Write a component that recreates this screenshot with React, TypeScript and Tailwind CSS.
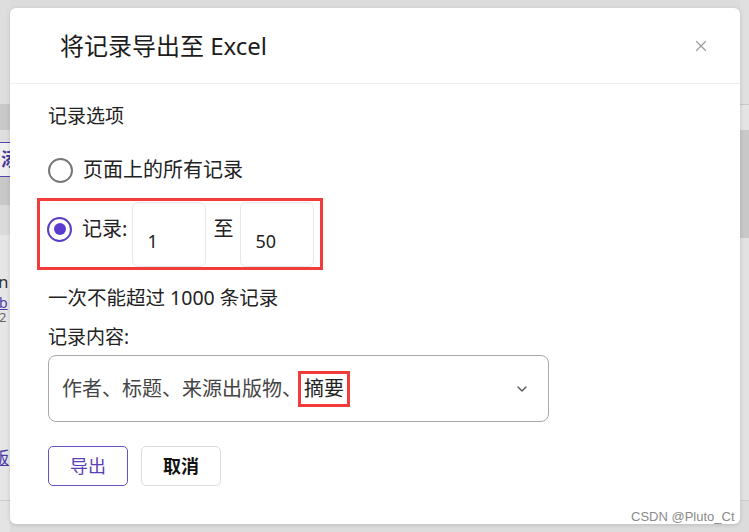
import { ChevronDown, X } from "lucide-react";

const font = { fontFamily: '"Noto Sans", "Noto Sans CJK SC", sans-serif' };

const Background = () => {
  return (
    <div className="flex h-full w-full justify-between">
      <div className="flex w-[10px] flex-col overflow-hidden">
        <div className="h-[104px] bg-[#dedede]" />
        <div className="h-[26px] bg-[#c9c9c9]" />
        <div className="h-[12px] bg-[#dedede]" />
        <div className="flex h-[35px] items-center justify-end overflow-hidden border-y border-[#5a45b0] bg-[#efefef]">
          <span className="mr-[-9px] text-[18px] font-bold text-[#4a3a9c]">添</span>
        </div>
        <div className="h-[28px] bg-[#c8c8c8]" />
        <div className="h-[30px] bg-[#dadada]" />
        <div className="flex h-[265px] flex-col bg-[#e6e6e6] text-[17px] leading-none">
          <span className="ml-[-2px] mt-[38px] text-[#333]">n</span>
          <span className="ml-[-1px] mt-[6px] text-[14px] leading-[13px] text-[#4a3aa8] underline">b</span>
          <span className="ml-[-1px] mt-[2px] text-[13px] leading-[12px] text-[#666]">2</span>
          <span className="ml-[-8px] mt-[126px] text-[#4a3aa8] underline">版</span>
        </div>
        <div className="flex-1 border-t border-[#cccccc] bg-[#e4e4e4]" />
      </div>
      <div className="flex w-[9px] flex-col">
        <div className="h-[105px] border-b border-[#c8c8c8] bg-[#e0e0e0]" />
        <div className="h-[25px] bg-[#e4e4e4]" />
        <div className="h-[108px] bg-[#c8c8c8]" />
        <div className="h-[262px] bg-[#e2e2e2]" />
        <div className="flex-1 border-t border-[#cccccc] bg-[#dcdcdc]" />
      </div>
    </div>
  );
};

const Radio = ({ checked }: { checked?: boolean }) => {
  return checked ? (
    <span className="flex h-[25px] w-[25px] items-center justify-center rounded-full border-[2.5px] border-[#5a3fc0]">
      <span className="h-[12px] w-[12px] rounded-full bg-[#5b3bd0]" />
    </span>
  ) : (
    <span className="h-[25px] w-[25px] rounded-full border-2 border-[#777777]" />
  );
};

const NumberBox = ({ value }: { value: string }) => {
  return (
    <div className="flex h-[65px] w-[74px] items-end rounded-md border border-[#e8e8e8] pb-[13px] pl-[14px] text-[18px] leading-6 text-[#222]">
      {value}
    </div>
  );
};

export default function App() {
  return (
    <div className="relative h-[532px] w-[749px] overflow-hidden bg-[#dcdcdc]" style={font}>
      <Background />

      <div className="absolute left-[10px] top-[8px] flex h-[516px] w-[730px] flex-col rounded-md bg-white shadow-[0_1px_4px_rgba(0,0,0,0.15)]">
        <header className="flex h-[76px] shrink-0 items-center justify-between border-b border-[#efefef] pl-[50px] pr-[30px]">
          <h2 className="text-[24px] leading-8 text-[#1c1c1c]">将记录导出至 Excel</h2>
          <X size={18} strokeWidth={1.5} className="text-[#9a9a9a]" />
        </header>

        <div className="flex flex-col pl-[38px] pt-[18px] text-[#222]">
          <p className="text-[19px] leading-7">记录选项</p>

          <label className="mt-[26px] flex items-center gap-[10px] text-[20px] leading-7">
            <Radio />
            页面上的所有记录
          </label>

          <div className="ml-[-11px] mt-[14px] flex h-[72px] w-[286px] items-center border-[3px] border-[#f23b3b] pl-[7px]">
            <div className="flex items-center gap-[10px] pb-[10px] text-[20px] leading-7">
              <Radio checked />
              记录:
            </div>
            <div className="ml-[5px] flex items-center gap-[7px]">
              <NumberBox value="1" />
              <span className="pb-[10px] text-[20px] leading-7">至</span>
              <NumberBox value="50" />
            </div>
          </div>

          <p className="mt-[14px] text-[19.5px] leading-7">一次不能超过 1000 条记录</p>
          <p className="mt-[11px] text-[19px] leading-7">记录内容:</p>

          <div className="mt-[4px] flex h-[67px] w-[501px] items-center justify-between rounded-lg border border-[#a9a9a9] pl-[13px] pr-[18px]">
            <span className="text-[20px] leading-7 text-[#444]">
              作者、标题、来源出版物、
              <span className="ml-[-4px] inline-block border-[3px] border-[#f23b3b] px-[3px] leading-[30px] text-[#222]">
                摘要
              </span>
            </span>
            <ChevronDown size={16} strokeWidth={2} className="text-[#555]" />
          </div>

          <div className="mt-[24px] flex gap-[13px]">
            <button className="h-[40px] w-[80px] rounded-[5px] border border-[#6a50c2] text-[18px] text-[#5a3fb5]">
              导出
            </button>
            <button className="h-[40px] w-[80px] rounded-[5px] border border-[#dddddd] text-[18px] font-bold text-[#111]">
              取消
            </button>
          </div>
        </div>
      </div>

      <span
        className="absolute left-[631px] top-[507px] text-[13px] text-[#8a8a8a]"
        style={{ fontFamily: '"Liberation Sans", Arial, sans-serif' }}
      >
        CSDN @Pluto_Ct
      </span>
    </div>
  );
}
